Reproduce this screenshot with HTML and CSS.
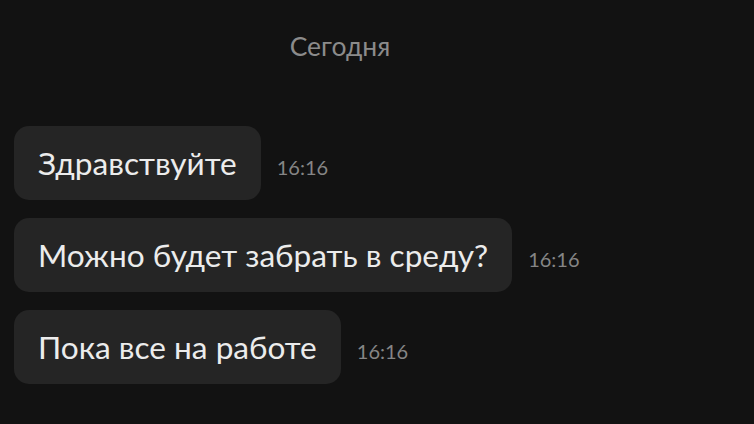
FILE: index.html
```html
<!DOCTYPE html>
<html lang="ru">
<head>
<meta charset="utf-8">
<link rel="stylesheet" href="styles.css">
</head>
<body>
<div class="chat">
  <div class="day">Сегодня</div>
  <div class="messages">
    <div class="row"><div class="bubble">Здравствуйте</div><span class="time">16:16</span></div>
    <div class="row"><div class="bubble">Можно будет забрать в среду?</div><span class="time">16:16</span></div>
    <div class="row"><div class="bubble">Пока все на работе</div><span class="time">16:16</span></div>
  </div>
</div>
</body>
</html>
```
FILE: styles.css
```css
html, body {
  margin: 0;
  padding: 0;
  background: #121212;
  height: 100%;
  overflow: hidden;
}
.chat {
  font-family: Lato, "Noto Sans", sans-serif;
  padding: 30px 14px 0;
}
.day {
  width: 652px;
  text-align: center;
  color: #8b8b8b;
  font-size: 26.5px;
  line-height: 32px;
}
.messages {
  margin-top: 64px;
  display: flex;
  flex-direction: column;
  gap: 18px;
}
.row {
  display: flex;
  align-items: center;
}
.bubble {
  background: #252525;
  color: #ececec;
  font-size: 31.6px;
  line-height: 74px;
  height: 74px;
  padding: 0 24px;
  border-radius: 15px;
}
.time {
  margin-left: 16px;
  margin-top: 8px;
  color: #858585;
  font-size: 20px;
}
```
